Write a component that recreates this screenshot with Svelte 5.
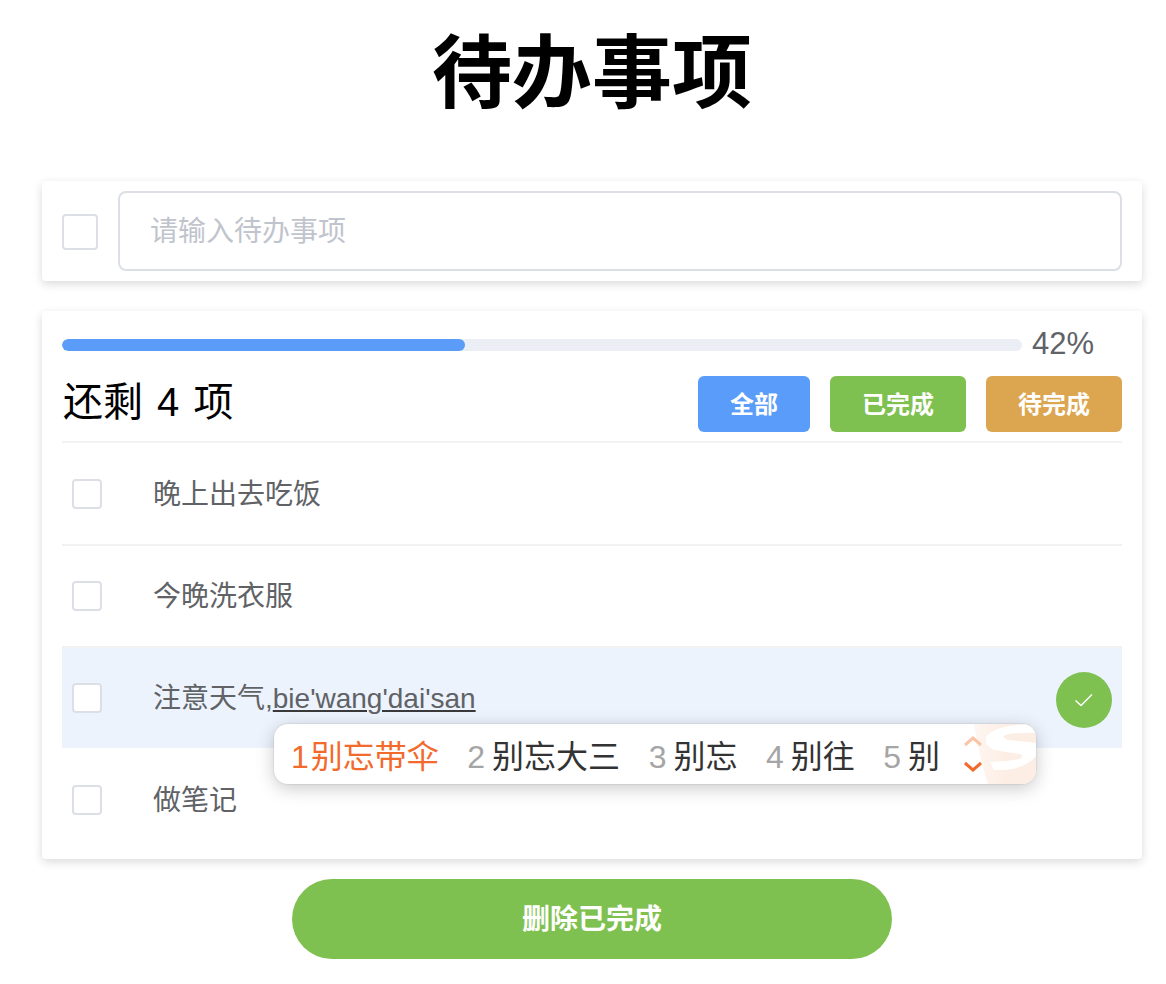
<script>
  let draft = $state('');
  let todos = $state([
    { id: 1, text: '晚上出去吃饭', done: false },
    { id: 2, text: '今晚洗衣服', done: false },
    { id: 3, text: '注意天气,', composing: "bie'wang'dai'san", done: false, active: true },
    { id: 4, text: '做笔记', done: false }
  ]);
  const filters = [
    { label: '全部', cls: 'blue' },
    { label: '已完成', cls: 'green' },
    { label: '待完成', cls: 'orange' }
  ];
  const candidates = ['别忘带伞', '别忘大三', '别忘', '别往', '别'];
</script>

<div class="page">
  <h1>待办事项</h1>

  <section class="card add">
    <input class="check big" type="checkbox" />
    <input class="text" type="text" placeholder="请输入待办事项" bind:value={draft} />
  </section>

  <section class="card list">
    <div class="progress">
      <div class="track"><div class="fill" style="width: 42%"></div></div>
      <span class="percent">42%</span>
    </div>
    <div class="head">
      <span class="left">还剩 4 项</span>
      <div class="filters">
        {#each filters as f}
          <button class={f.cls}>{f.label}</button>
        {/each}
      </div>
    </div>
    <ul>
      {#each todos as todo}
        <li class:active={todo.active}>
          <input class="check" type="checkbox" bind:checked={todo.done} />
          <span class="label">{todo.text}{#if todo.composing}<u>{todo.composing}</u>{/if}</span>
          {#if todo.active}
            <span class="ok">
              <svg width="20" height="16" viewBox="0 0 20 16" fill="none" stroke="#fff" stroke-width="1.4">
                <path d="M1.5 8.5 L7 13.5 L18 2.5" />
              </svg>
            </span>
          {/if}
        </li>
      {/each}
    </ul>

    <!-- input method candidate window -->
    <div class="ime">
      <svg class="logo" width="66" height="60" viewBox="0 0 66 60">
        <defs>
          <linearGradient id="logofade" x1="0" y1="0" x2="1" y2="0">
            <stop offset="0" stop-color="#fdeee5" stop-opacity="0.5" />
            <stop offset="0.5" stop-color="#fdeee5" />
            <stop offset="1" stop-color="#fdeee5" />
          </linearGradient>
        </defs>
        <path d="M4 0 H66 V60 H18 Q8 30 4 0 Z" fill="url(#logofade)" />
        <path d="M66 1 Q28 -1 17 12 Q12 24 30 27 L50 30 Q55 33 49 35 Q34 38 20 38 L24 46 Q54 47 66 32 V19 L38 16 Q28 12 40 10 Q54 8 66 9 Z" fill="#fff" />
      </svg>
      {#each candidates as word, i}
        <span class="cand" class:first={i === 0}><b>{i + 1}</b>{word}</span>
      {/each}
      <span class="arrows">
        <svg width="20" height="38" viewBox="0 0 20 38" fill="none" stroke-width="3">
          <path d="M2 10 L10 3 L18 10" stroke="#fcc4a6" />
          <path d="M2 28 L10 35 L18 28" stroke="#f26a2c" />
        </svg>
      </span>
    </div>
  </section>

  <button class="clear">删除已完成</button>
</div>

<style>
  :global(body) {
    background: #fff;
    font-family: "Liberation Sans", "Noto Sans CJK SC", sans-serif;
  }
  .page {
    width: 1100px;
    margin-left: 42px;
    padding-bottom: 25px;
  }
  h1 {
    margin: 0;
    padding-top: 20px;
    height: 181px;
    box-sizing: border-box;
    font-size: 80px;
    line-height: 108px;
    font-weight: 700;
    text-align: center;
    color: #000;
  }
  .card {
    position: relative;
    background: #fff;
    border-radius: 4px;
    box-shadow: 0 3px 10px rgba(0, 0, 0, 0.15);
    padding: 10px 20px;
  }
  .add {
    display: flex;
    align-items: center;
    gap: 20px;
    height: 100px;
    box-sizing: border-box;
    margin-bottom: 30px;
  }
  .check {
    appearance: none;
    flex: none;
    margin: 0;
    width: 30px;
    height: 30px;
    background: #fff;
    border: 2px solid #dcdfe6;
    border-radius: 4px;
    box-sizing: border-box;
  }
  .check.big {
    width: 36px;
    height: 36px;
    margin-top: 1px;
  }
  .text {
    flex: 1;
    height: 80px;
    box-sizing: border-box;
    border: 2px solid #dcdfe6;
    border-radius: 8px;
    padding: 2px 30px 0;
    font: inherit;
    font-size: 28px;
    color: #606266;
    outline: none;
  }
  .text::placeholder {
    color: #c0c4cc;
  }
  .list {
    height: 548px;
    box-sizing: border-box;
    padding: 28px 20px 0;
    margin-bottom: 20px;
  }
  .progress {
    display: flex;
    align-items: center;
    height: 12px;
    gap: 10px;
  }
  .track {
    width: 960px;
    height: 12px;
    border-radius: 6px;
    background: #ebeef5;
    overflow: hidden;
  }
  .fill {
    height: 100%;
    border-radius: 6px;
    background: #5a9cf8;
  }
  .percent {
    font-size: 31px;
    color: #606266;
    margin-top: -2px;
  }
  .head {
    display: flex;
    justify-content: space-between;
    align-items: center;
    height: 67px;
    margin-top: 25px;
    padding-bottom: 9px;
    box-sizing: border-box;
    border-bottom: 2px solid #f1f2f4;
  }
  .left {
    font-size: 40px;
    line-height: 46px;
    word-spacing: 3px;
    margin: -4px 0 0 1px;
    color: #000;
  }
  .filters {
    display: flex;
    gap: 20px;
  }
  .filters button {
    height: 56px;
    padding: 0 32px 4px;
    border: 0;
    border-radius: 6px;
    color: #fff;
    font: inherit;
    font-size: 24px;
    font-weight: 700;
  }
  .blue {
    background: #5a9cfa;
  }
  .green {
    background: #7fc150;
  }
  .orange {
    background: #dca54f;
  }
  ul {
    list-style: none;
    margin: 0;
    padding: 1px 0 0;
  }
  li {
    display: flex;
    align-items: center;
    height: 102px;
    box-sizing: border-box;
    padding: 0 10px;
    border-bottom: 2px solid #f1f2f4;
  }
  li:last-child {
    border-bottom-color: transparent;
  }
  li.active {
    background: #ecf3fd;
    border-bottom-color: #fff;
    background-clip: padding-box;
  }
  .label {
    flex: 1;
    margin-left: 51px;
    padding-bottom: 4px;
    font-size: 28px;
    color: #606266;
  }
  .label u {
    text-decoration-color: #3a3a3a;
    text-decoration-thickness: 2px;
    text-underline-offset: 2px;
  }
  .ok {
    display: flex;
    align-items: center;
    justify-content: center;
    width: 56px;
    height: 56px;
    margin-top: 4px;
    border-radius: 50%;
    background: #7fc150;
  }
  .ime {
    position: absolute;
    left: 232px;
    top: 413px;
    width: 762px;
    height: 60px;
    box-sizing: border-box;
    display: flex;
    align-items: center;
    padding-left: 17px;
    background: #fff;
    border-radius: 14px;
    overflow: hidden;
    box-shadow: 0 0 0 1px rgba(0, 0, 0, 0.05), 0 4px 18px rgba(0, 0, 0, 0.22);
    font-size: 32px;
    color: #333;
  }
  .logo {
    position: absolute;
    right: 0;
    top: 0;
  }
  .cand {
    position: relative;
    margin-right: 28.5px;
    white-space: nowrap;
  }
  .cand b {
    font-weight: 400;
    color: #a5a5a5;
    margin-right: 7px;
  }
  .cand.first {
    color: #f26a2c;
  }
  .cand.first b {
    color: #f26a2c;
    margin-right: 2px;
  }
  .arrows {
    position: relative;
    display: flex;
    margin-left: -6px;
  }
  .clear {
    display: block;
    width: 600px;
    height: 80px;
    margin: 0 auto;
    padding: 0 0 4px;
    border: 0;
    border-radius: 40px;
    background: #7fc150;
    color: #fff;
    font: inherit;
    font-size: 28px;
    font-weight: 700;
  }
</style>
